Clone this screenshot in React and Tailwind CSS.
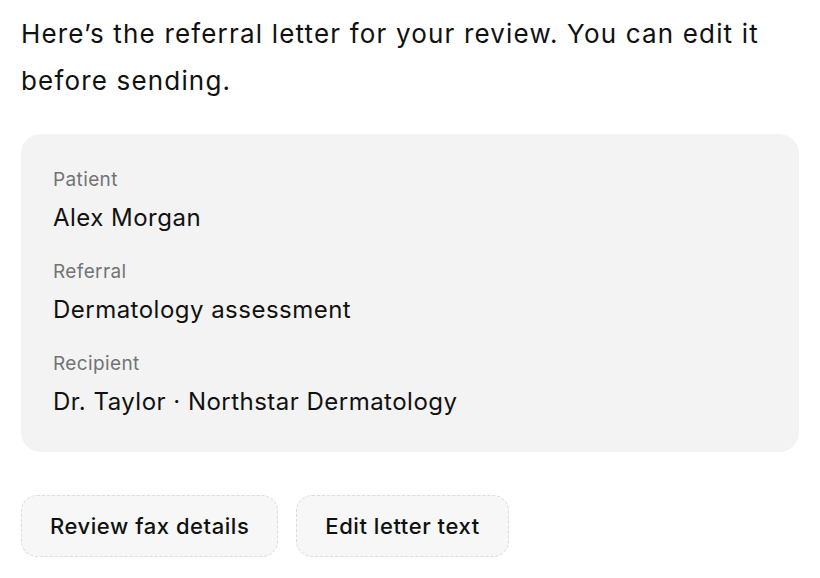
import React from "react";

const fields = [
  { label: "Patient", value: "Alex Morgan" },
  { label: "Referral", value: "Dermatology assessment" },
  { label: "Recipient", value: "Dr. Taylor · Northstar Dermatology" },
];

export default function App() {
  return (
    <div className="min-h-screen bg-white px-[21px] pt-[10px] font-['Inter',sans-serif] text-[#111111]">
      <p className="text-[26px] leading-[47px] tracking-[0.045em]">
        Here’s the referral letter for your review. You can edit it before sending.
      </p>

      <div className="mt-[30px] flex flex-col gap-6 rounded-[20px] bg-[#f3f3f3] px-8 pt-[33px] pb-[33px]">
        {fields.map((f) => (
          <div key={f.label} className="flex flex-col gap-2">
            <span className="text-[19px] leading-[26px] tracking-[0.02em] text-[#737373]">
              {f.label}
            </span>
            <span className="text-[24px] leading-[34px] tracking-[0.02em]">{f.value}</span>
          </div>
        ))}
      </div>

      <div className="mt-[43px] flex gap-[18px]">
        <button className="h-[62px] rounded-[16px] border border-dashed border-[#dcdcdc] bg-[#f7f7f7] px-[28px] text-[22px] font-medium tracking-[0.025em]">
          Review fax details
        </button>
        <button className="h-[62px] rounded-[16px] border border-dashed border-[#dcdcdc] bg-[#f7f7f7] px-[28px] text-[22px] font-medium tracking-[0.025em]">
          Edit letter text
        </button>
      </div>
    </div>
  );
}
